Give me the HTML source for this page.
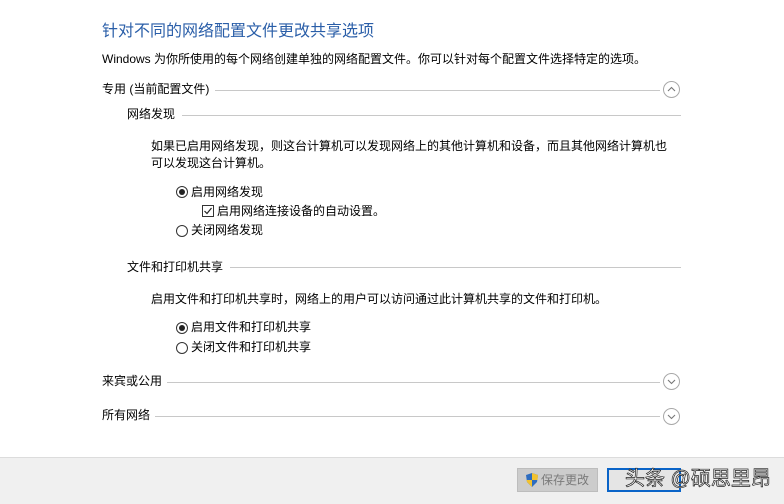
<!DOCTYPE html>
<html><head><meta charset="utf-8"><style>
body{margin:0;width:784px;height:503px;background:#fff;position:relative;overflow:hidden;font-family:"Liberation Sans","Microsoft YaHei","Noto Sans CJK SC",sans-serif;font-size:12px;color:#000}
.a{position:absolute;white-space:nowrap;line-height:16px}
.ln{position:absolute;height:1px;background:#c8c8c8}
.circ{position:absolute;width:17px;height:17px;border:1px solid #a8a8a8;border-radius:50%;box-sizing:border-box}
.rad{position:absolute;width:12px;height:12px;border:1px solid #333;border-radius:50%;box-sizing:border-box;background:#fff}
.rad.on::after{content:"";position:absolute;left:2px;top:2px;width:6px;height:6px;border-radius:50%;background:#222}
</style></head><body>
<div class="a" style="left:102px;top:22px;font-size:16px;line-height:20px;color:#2a5ea8">针对不同的网络配置文件更改共享选项</div>
<div class="a" style="left:102px;top:51px">Windows 为你所使用的每个网络创建单独的网络配置文件。你可以针对每个配置文件选择特定的选项。</div>

<div class="a" style="left:102px;top:81px">专用 (当前配置文件)</div>
<div class="ln" style="left:215px;top:90px;width:445px"></div>
<div class="circ" style="left:663px;top:81px"><svg width="15" height="15" style="position:absolute;left:0;top:0"><path d="M4 9 L7.5 5.5 L11 9" fill="none" stroke="#777" stroke-width="1.1"/></svg></div>

<div class="a" style="left:127px;top:106px">网络发现</div>
<div class="ln" style="left:182px;top:115px;width:499px"></div>
<div class="a" style="left:151px;top:138px">如果已启用网络发现，则这台计算机可以发现网络上的其他计算机和设备，而且其他网络计算机也</div>
<div class="a" style="left:151px;top:155px">可以发现这台计算机。</div>
<div class="rad on" style="left:176px;top:186px"></div>
<div class="a" style="left:191px;top:184px">启用网络发现</div>
<div style="position:absolute;left:202px;top:205px;width:12px;height:12px;border:1px solid #333;box-sizing:border-box"><svg width="10" height="10" style="position:absolute;left:0;top:0"><path d="M1.5 5 L4 7.5 L8.5 2" fill="none" stroke="#222" stroke-width="1.2"/></svg></div>
<div class="a" style="left:217px;top:203px">启用网络连接设备的自动设置。</div>
<div class="rad" style="left:176px;top:225px"></div>
<div class="a" style="left:191px;top:222px">关闭网络发现</div>

<div class="a" style="left:127px;top:259px">文件和打印机共享</div>
<div class="ln" style="left:230px;top:267px;width:451px"></div>
<div class="a" style="left:151px;top:291px">启用文件和打印机共享时，网络上的用户可以访问通过此计算机共享的文件和打印机。</div>
<div class="rad on" style="left:176px;top:322px"></div>
<div class="a" style="left:191px;top:319px">启用文件和打印机共享</div>
<div class="rad" style="left:176px;top:342px"></div>
<div class="a" style="left:191px;top:339px">关闭文件和打印机共享</div>

<div class="a" style="left:102px;top:373px">来宾或公用</div>
<div class="ln" style="left:167px;top:382px;width:493px"></div>
<div class="circ" style="left:663px;top:373px"><svg width="15" height="15" style="position:absolute;left:0;top:0"><path d="M4 6 L7.5 9.5 L11 6" fill="none" stroke="#777" stroke-width="1.1"/></svg></div>
<div class="a" style="left:102px;top:407px">所有网络</div>
<div class="ln" style="left:155px;top:416px;width:505px"></div>
<div class="circ" style="left:663px;top:408px"><svg width="15" height="15" style="position:absolute;left:0;top:0"><path d="M4 6 L7.5 9.5 L11 6" fill="none" stroke="#777" stroke-width="1.1"/></svg></div>

<div style="position:absolute;left:0;top:457px;width:784px;height:46px;background:#f0f0f0;border-top:1px solid #dcdcdc"></div>
<div style="position:absolute;left:517px;top:468px;width:81px;height:24px;background:#cccccc;border:1px solid #bdbdbd;box-sizing:border-box"></div>
<svg style="position:absolute;left:525px;top:472px" width="14" height="16"><path d="M7 1 L13 3 L12 10 L7 15 L2 10 L1 3Z" fill="#2d6cc0"/><path d="M7 1 L13 3 L12.5 8 L7 8Z" fill="#f2c230"/><path d="M7 8 L1.5 8 L2 10 L7 15Z" fill="#f2c230"/></svg>
<div class="a" style="left:541px;top:472px;color:#7a7a7a">保存更改</div>
<div style="position:absolute;left:607px;top:468px;width:74px;height:24px;border:2px solid #0a64c8;box-sizing:border-box;background:#e5e5e5"></div>
<div class="a" style="left:625px;top:466px;font-size:20px;line-height:26px;color:#fff;-webkit-text-stroke:0.7px #222">头条 @硕思里昂</div>
</body></html>
